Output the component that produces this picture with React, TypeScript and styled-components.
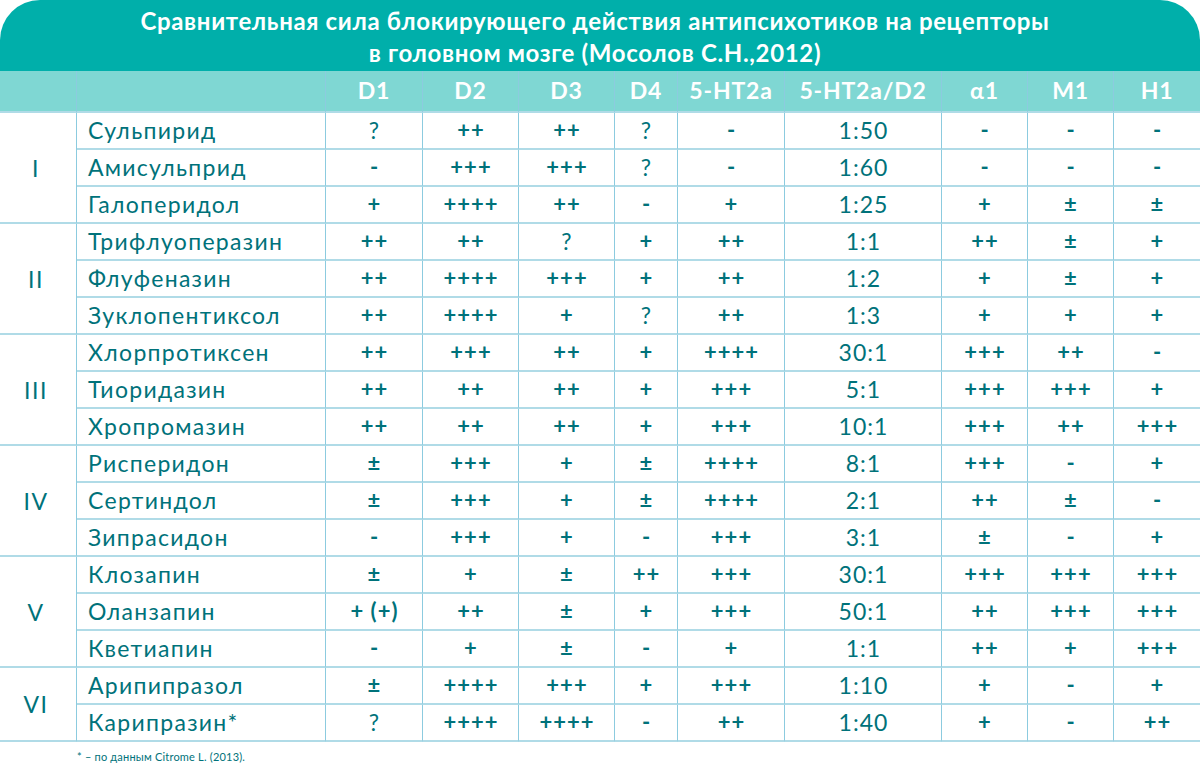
import React from "react";
import styled, { createGlobalStyle } from "styled-components";

const GlobalStyle = createGlobalStyle`
  html, body { margin: 0; padding: 0; background: #ffffff; }
  body { font-family: Lato, "Open Sans", sans-serif; }
`;

const TEXT = "#00727a";
const LINE_H = "#b0dbe7";
const LINE_V = "#8ccbdf";

const Page = styled.div`
  width: 1201px;
  display: flex;
  flex-direction: column;
`;

const TitleBar = styled.div`
  width: 1200px;
  height: 71px;
  box-sizing: border-box;
  background: #00afaa;
  border-radius: 40px 40px 0 0;
  display: flex;
  align-items: center;
  justify-content: center;
  padding: 2px 10px 0 0;
  color: #ffffff;
  font-weight: 700;
  font-size: 24px;
  letter-spacing: 0.65px;
  line-height: 32px;
  text-align: center;
`;

const Grid = styled.div`
  width: 1200px;
  display: grid;
  grid-template-columns: 77px 249px 97px 96px 96px 63px 107px 157px 86px 86px 86px;
  grid-template-rows: 42px;
  grid-auto-rows: 37px;
`;

const HeadCell = styled.div<{ $last?: boolean }>`
  box-sizing: border-box;
  background: #7fd7d3;
  color: #ffffff;
  font-weight: 700;
  font-size: 23px;
  letter-spacing: 0.8px;
  display: flex;
  align-items: center;
  justify-content: center;
  padding-bottom: 2px;
  border-bottom: 2px solid ${LINE_H};
  border-right: ${(p) => (p.$last ? "none" : `1px solid ${LINE_V}`)};
`;

const GroupCell = styled.div<{ $span: number }>`
  grid-row: span ${(p) => p.$span};
  box-sizing: border-box;
  border-bottom: 2px solid ${LINE_H};
  border-right: 1px solid ${LINE_V};
  color: ${TEXT};
  font-size: 23px;
  letter-spacing: 1.5px;
  display: flex;
  align-items: center;
  justify-content: center;
  padding-right: 4px;
`;

const NameCell = styled.div`
  box-sizing: border-box;
  border-bottom: 2px solid ${LINE_H};
  border-right: 1px solid ${LINE_V};
  color: ${TEXT};
  font-size: 23px;
  letter-spacing: 1.3px;
  display: flex;
  align-items: center;
  padding: 0 0 2px 11px;
  white-space: nowrap;
`;

const ValueCell = styled.div<{ $sym?: boolean; $last?: boolean }>`
  box-sizing: border-box;
  border-bottom: 2px solid ${LINE_H};
  border-right: ${(p) => (p.$last ? "none" : `1px solid ${LINE_V}`)};
  color: ${TEXT};
  font-size: ${(p) => (p.$sym ? "22px" : "23px")};
  letter-spacing: 1px;
  font-weight: ${(p) => (p.$sym ? 700 : 400)};
  display: flex;
  align-items: center;
  justify-content: center;
  padding: 0 0 2px 1px;
  white-space: nowrap;
`;

const Footnote = styled.div`
  color: ${TEXT};
  font-size: 11px;
  letter-spacing: 0.2px;
  padding: 8px 0 0 77px;
`;

const headers = ["", "", "D1", "D2", "D3", "D4", "5-HT2a", "5-HT2a/D2", "α1", "M1", "H1"];

type Drug = [string, string[]];
type Group = { label: string; drugs: Drug[] };

const groups: Group[] = [
  {
    label: "I",
    drugs: [
      ["Сульпирид", ["?", "++", "++", "?", "-", "1:50", "-", "-", "-"]],
      ["Амисульприд", ["-", "+++", "+++", "?", "-", "1:60", "-", "-", "-"]],
      ["Галоперидол", ["+", "++++", "++", "-", "+", "1:25", "+", "±", "±"]],
    ],
  },
  {
    label: "II",
    drugs: [
      ["Трифлуоперазин", ["++", "++", "?", "+", "++", "1:1", "++", "±", "+"]],
      ["Флуфеназин", ["++", "++++", "+++", "+", "++", "1:2", "+", "±", "+"]],
      ["Зуклопентиксол", ["++", "++++", "+", "?", "++", "1:3", "+", "+", "+"]],
    ],
  },
  {
    label: "III",
    drugs: [
      ["Хлорпротиксен", ["++", "+++", "++", "+", "++++", "30:1", "+++", "++", "-"]],
      ["Тиоридазин", ["++", "++", "++", "+", "+++", "5:1", "+++", "+++", "+"]],
      ["Хропромазин", ["++", "++", "++", "+", "+++", "10:1", "+++", "++", "+++"]],
    ],
  },
  {
    label: "IV",
    drugs: [
      ["Рисперидон", ["±", "+++", "+", "±", "++++", "8:1", "+++", "-", "+"]],
      ["Сертиндол", ["±", "+++", "+", "±", "++++", "2:1", "++", "±", "-"]],
      ["Зипрасидон", ["-", "+++", "+", "-", "+++", "3:1", "±", "-", "+"]],
    ],
  },
  {
    label: "V",
    drugs: [
      ["Клозапин", ["±", "+", "±", "++", "+++", "30:1", "+++", "+++", "+++"]],
      ["Оланзапин", ["+ (+)", "++", "±", "+", "+++", "50:1", "++", "+++", "+++"]],
      ["Кветиапин", ["-", "+", "±", "-", "+", "1:1", "++", "+", "+++"]],
    ],
  },
  {
    label: "VI",
    drugs: [
      ["Арипипразол", ["±", "++++", "+++", "+", "+++", "1:10", "+", "-", "+"]],
      ["Карипразин*", ["?", "++++", "++++", "-", "++", "1:40", "+", "-", "++"]],
    ],
  },
];

const isSym = (v: string) => /^[+\-±() ]+$/.test(v);

export default function App() {
  return (
    <Page>
      <GlobalStyle />
      <TitleBar>
        Сравнительная сила блокирующего действия антипсихотиков на рецепторы
        <br />
        в головном мозге (Мосолов С.Н.,2012)
      </TitleBar>
      <Grid>
        {headers.map((h, i) => (
          <HeadCell key={`h${i}`} $last={i === headers.length - 1}>
            {h}
          </HeadCell>
        ))}
        {groups.map((g) =>
          g.drugs.map(([name, vals], di) => (
            <React.Fragment key={name}>
              {di === 0 && <GroupCell $span={g.drugs.length}>{g.label}</GroupCell>}
              <NameCell>{name}</NameCell>
              {vals.map((v, vi) => (
                <ValueCell key={vi} $sym={isSym(v)} $last={vi === vals.length - 1}>
                  {v}
                </ValueCell>
              ))}
            </React.Fragment>
          ))
        )}
      </Grid>
      <Footnote>* – по данным Citrome L. (2013).</Footnote>
    </Page>
  );
}
